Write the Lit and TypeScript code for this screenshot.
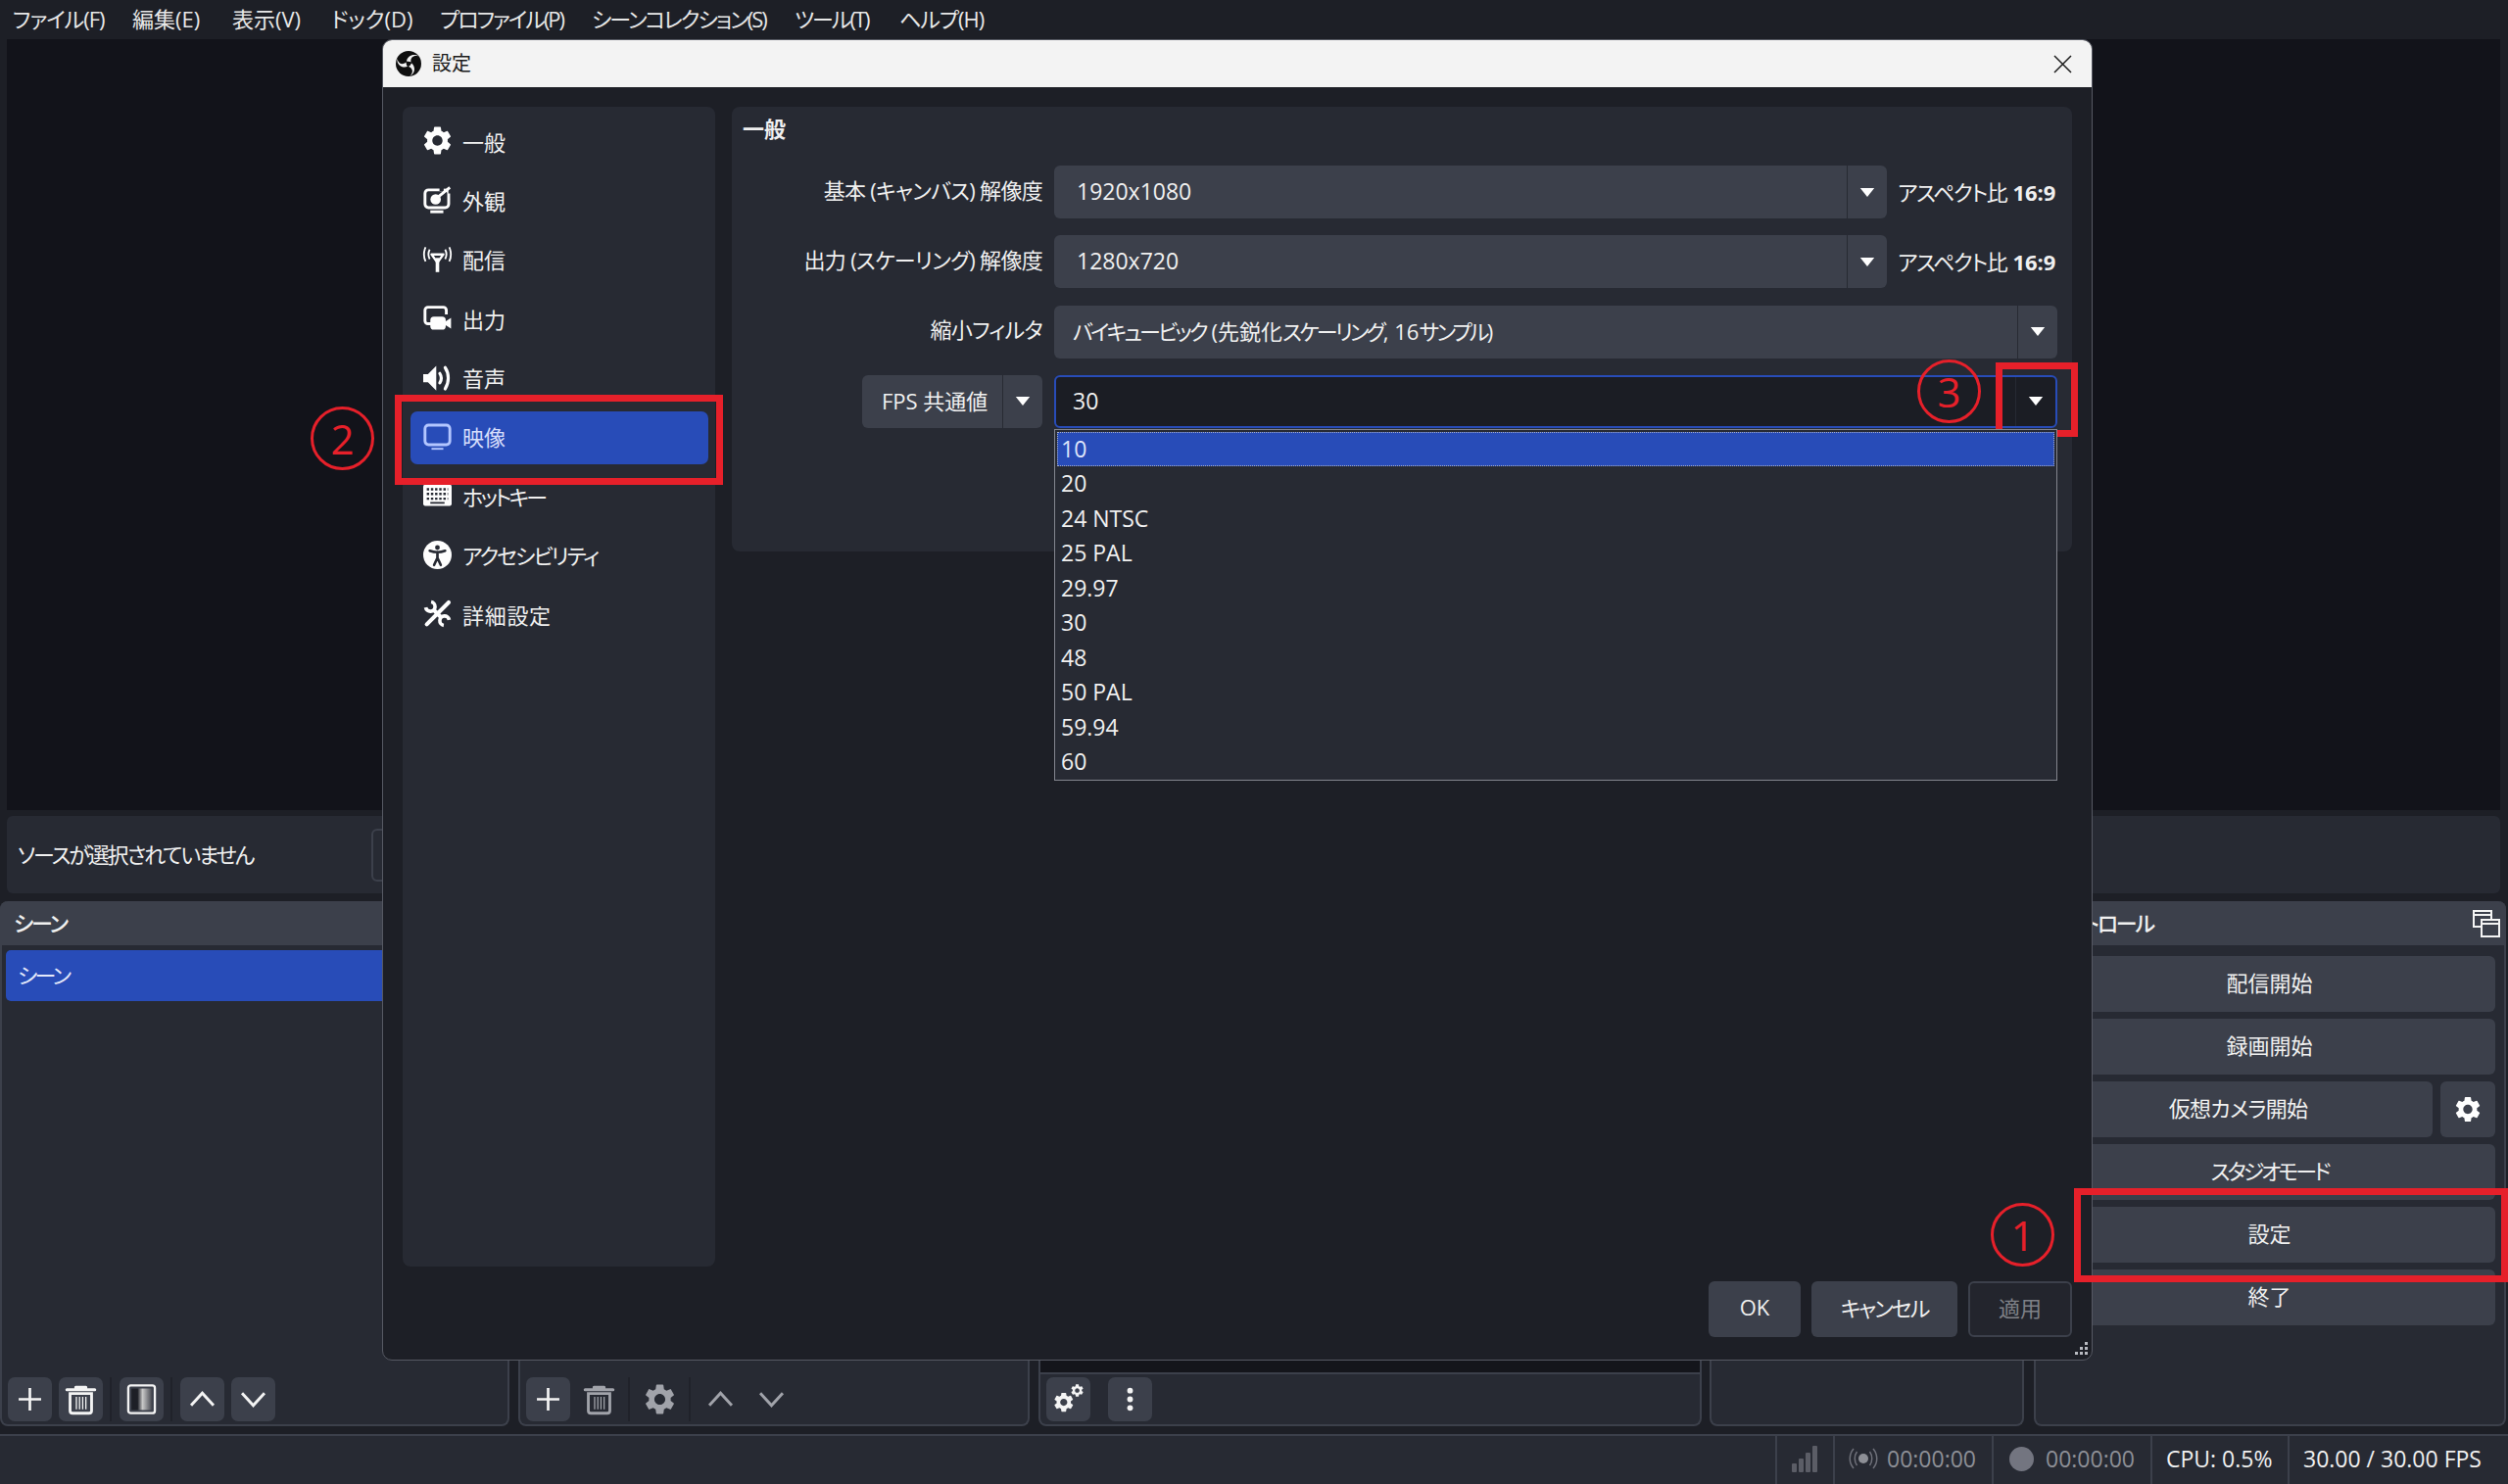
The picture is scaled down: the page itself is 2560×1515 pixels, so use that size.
import { LitElement, css, html, svg } from "lit";
import { customElement } from "lit/decorators.js";

const GEAR =
  "M19.14 12.94c.04-.3.06-.61.06-.94 0-.32-.02-.64-.07-.94l2.03-1.58a.49.49 0 0 0 .12-.61l-1.92-3.32a.488.488 0 0 0-.59-.22l-2.39.96c-.5-.38-1.03-.7-1.62-.94l-.36-2.54a.484.484 0 0 0-.48-.41h-3.84c-.24 0-.43.17-.47.41l-.36 2.54c-.59.24-1.13.57-1.62.94l-2.39-.96c-.22-.08-.47 0-.59.22L2.74 8.87c-.12.21-.08.47.12.61l2.03 1.58c-.05.3-.09.63-.09.94s.02.64.07.94l-2.03 1.58a.49.49 0 0 0-.12.61l1.92 3.32c.12.22.37.29.59.22l2.39-.96c.5.38 1.03.7 1.62.94l.36 2.54c.05.24.24.41.48.41h3.84c.24 0 .44-.17.47-.41l.36-2.54c.59-.24 1.13-.56 1.62-.94l2.39.96c.22.08.47 0 .59-.22l1.92-3.32c.12-.22.07-.47-.12-.61l-2.01-1.58zM12 15.6c-1.98 0-3.6-1.62-3.6-3.6s1.62-3.6 3.6-3.6 3.6 1.62 3.6 3.6-1.62 3.6-3.6 3.6z";

const icon = (body: unknown, box = "0 0 24 24") =>
  html`<svg class="icon" viewBox=${box} fill="none" stroke="none">${body}</svg>`;

// 歯車は余白を詰めて描く
const gear = icon(svg`<path d=${GEAR} fill="currentColor" fill-rule="evenodd" />`, "2 2 20 20");

const arrow = html`<svg class="arrow" viewBox="0 0 16 10"><path d="M0 0h16L8 10z" fill="#fefefe" /></svg>`;

const icons = {
  general: gear,
  look: icon(svg`
    <rect x="1.500" y="4" width="20" height="15" rx="3" stroke="currentColor" stroke-width="2.400" />
    <path d="M15.500 2v3M17 1h6v6" stroke="#272a33" stroke-width="3.500" />
    <circle cx="10.500" cy="12" r="4.400" fill="currentColor" />
    <path d="M12 10.500 22.500 2" stroke="currentColor" stroke-width="2.400" />
    <path d="M6 22.500h11" stroke="currentColor" stroke-width="2.400" />
  `),
  stream: icon(svg`
    <path d="M7 8h10l-5 7z" stroke="currentColor" stroke-width="2" stroke-linejoin="round" />
    <path d="M12 11v12" stroke="currentColor" stroke-width="3" />
    <path d="M5.500 4c-1.500 2.500-1.500 5 0 8M2 2c-1.800 4-1.800 8 0 12M18.500 4c1.500 2.500 1.500 5 0 8M22 2c1.800 4 1.800 8 0 12" stroke="currentColor" stroke-width="1.500" />
  `),
  output: icon(svg`
    <path d="M7 17H4a2.500 2.500 0 0 1-2.500-2.500v-9A2.500 2.500 0 0 1 4 3h13a2.500 2.500 0 0 1 2.500 2.500V9" stroke="currentColor" stroke-width="2.400" />
    <rect x="6" y="11" width="13" height="11" rx="3" fill="currentColor" />
    <path d="M18 15.500 23.500 12v9L18 17.500z" fill="currentColor" />
  `),
  audio: icon(svg`
    <path d="M0 9h4l7-7v21l-7-7H0z" fill="currentColor" stroke="none" />
    <path d="M14 8.500c1.600 2.500 1.600 5.500 0 8M18.500 3.500c3.500 5 3.500 13 0 18" stroke="currentColor" stroke-width="2.600" stroke-linecap="round" />
  `),
  video: icon(svg`
    <rect x="1.500" y="2.500" width="21" height="16.500" rx="3" stroke="currentColor" stroke-width="2.400" />
    <path d="M7 22.500h10" stroke="currentColor" stroke-width="1.600" />
  `),
  hotkey: icon(svg`
    <rect x="0" y="3" width="24" height="18" rx="1.500" fill="currentColor" />
    <path d="M3 7h18M3 11h18M3 15h18" stroke="#272a33" stroke-width="2" stroke-dasharray="2 1.500" />
    <path d="M6 18.500h12" stroke="#272a33" stroke-width="1.500" />
  `),
  access: icon(svg`
    <circle cx="12" cy="12" r="12" fill="currentColor" />
    <circle cx="12" cy="5.800" r="2" fill="#272a33" />
    <path d="M5.500 8.500c4 1.500 9 1.500 13 0M12 9.500v6M12 14.500l-2.800 6M12 14.500l2.800 6" stroke="#272a33" stroke-width="2.200" stroke-linecap="round" />
  `),
  tools: icon(svg`
    <path d="M21.500 2.500 3 21" stroke="currentColor" stroke-width="3.400" stroke-linecap="round" />
    <path d="M6.700 2.060A4 4 0 1 1 2.060 6.700" stroke="currentColor" stroke-width="3" />
    <path d="M17.300 21.940A4 4 0 1 1 21.940 17.300" stroke="currentColor" stroke-width="3" />
    <path d="M8.500 8.500 15.500 15.500" stroke="currentColor" stroke-width="3.400" />
  `),
};

const plus = icon(svg`<path d="M12 1v22M1 12h22" stroke="currentColor" stroke-width="2.600" />`);
const trash = icon(svg`
  <path d="M1 4.500h22M8 2.500h8" stroke="currentColor" stroke-width="2.400" stroke-linecap="round" />
  <path d="M3.500 7.500h17v13.500a2 2 0 0 1-2 2h-13a2 2 0 0 1-2-2z" stroke="currentColor" stroke-width="2.200" />
  <path d="M8.500 10v10M11 10v10M13.500 10v10M16 10v10" stroke="currentColor" stroke-width="1" />
`);
const filter = icon(svg`
  <defs>
    <linearGradient id="fade">
      <stop offset="0.3" stop-color="#1d1f26" />
      <stop offset="0.55" stop-color="#c8c8c8" />
      <stop offset="1" stop-color="#4a4c54" />
    </linearGradient>
  </defs>
  <rect x="1.500" y="1" width="21" height="22" rx="2" stroke="currentColor" stroke-width="1.800" />
  <rect x="4" y="3.500" width="16" height="17" fill="url(#fade)" />
`);
const up = icon(svg`<path d="M1 18 12 6l11 12" stroke="currentColor" stroke-width="2.800" />`);
const down = icon(svg`<path d="M1 6l11 12L23 6" stroke="currentColor" stroke-width="2.800" />`);
const gears = icon(svg`
  <g transform="translate(-1 5) scale(.78)"><path d=${GEAR} fill="currentColor" fill-rule="evenodd" /></g>
  <g transform="translate(13 -1) scale(.5)"><path d=${GEAR} fill="currentColor" fill-rule="evenodd" /></g>
`);
const dots = icon(svg`
  <circle cx="12" cy="3.500" r="2.800" fill="currentColor" />
  <circle cx="12" cy="12" r="2.800" fill="currentColor" />
  <circle cx="12" cy="20.500" r="2.800" fill="currentColor" />
`);

const obsLogo = html`<svg class="logo" viewBox="-13 -13 26 26">
  <circle r="13" fill="#0f0f0f" />
  ${[0, 120, 240].map(
    (a) => svg`<path transform="rotate(${a})" d="M-2-2.500C-1-8 5-11 10.500-7.500 5.500-9 1.500-6.500 2.500-1.500z" fill="#f3f3f3" />`,
  )}
  <circle r="2.300" fill="#0f0f0f" />
</svg>`;

// カナが多いラベルは参照の字幅に合わせて詰める
const MENU: [string, string][] = [
  ["ファイル(F)", "ls-1"],
  ["編集(E)", ""],
  ["表示(V)", ""],
  ["ドック(D)", ""],
  ["プロファイル(P)", "ls-2"],
  ["シーンコレクション(S)", "ls-2"],
  ["ツール(T)", "ls-2"],
  ["ヘルプ(H)", "ls-1"],
];
const NAV: [string, keyof typeof icons, string][] = [
  ["一般", "general", ""],
  ["外観", "look", ""],
  ["配信", "stream", ""],
  ["出力", "output", ""],
  ["音声", "audio", ""],
  ["映像", "video", ""],
  ["ホットキー", "hotkey", "ls-3"],
  ["アクセシビリティ", "access", "ls-2"],
  ["詳細設定", "tools", "ls-wide"],
];
const FPS = ["10", "20", "24 NTSC", "25 PAL", "29.97", "30", "48", "50 PAL", "59.94", "60"];

@customElement("app-root")
export class AppRoot extends LitElement {
  static styles = css`
    :host {
      display: block;
      position: relative;
      width: 2560px;
      height: 1515px;
      overflow: hidden;
      background: #1d1f26;
      color: #f0f0f0;
      font-family: "Open Sans", "Noto Sans CJK JP", sans-serif;
      font-size: 22px;
      font-feature-settings: "palt";
    }
    * {
      box-sizing: border-box;
    }
    .ls-1 {
      letter-spacing: -1px;
    }
    .ls-2 {
      letter-spacing: -2px;
    }
    .ls-3 {
      letter-spacing: -2.700px;
    }
    .ls-wide {
      letter-spacing: 0.700px;
    }
    .icon {
      display: block;
      width: 100%;
      height: 100%;
      overflow: visible;
    }
    .window {
      display: flex;
      flex-direction: column;
      height: 100%;
    }

    .menubar {
      display: grid;
      grid-template-columns: 122px 102px 101px 111px 155px 207px 107px auto;
      height: 40px;
      padding: 0 0 5px 13px;
      flex: none;
      align-items: center;
      color: #e8e8e8;
      white-space: nowrap;
    }
    .preview {
      height: 787px;
      margin: 0 8px 0 7px;
      flex: none;
      background: #12131a;
    }
    .context {
      display: flex;
      align-items: center;
      height: 79px;
      margin: 6px 8px 8px 7px;
      padding: 0 0 4px 11px;
      flex: none;
      border-radius: 6px;
      background: #272a33;
      letter-spacing: -2.100px;
    }
    .context-btn {
      width: 100px;
      height: 54px;
      margin: 4px 0 0 121px;
      border: 2px solid #3c404b;
      border-radius: 6px;
    }

    .docks {
      display: flex;
      height: 536px;
      flex: none;
    }
    .dock {
      display: flex;
      flex-direction: column;
      flex: none;
      border: 2px solid #3c404b;
      border-top: 0;
      border-radius: 8px;
      background: #272a33;
    }
    .dock-scenes {
      width: 520px;
      margin-right: 9px;
    }
    .dock-sources {
      width: 522px;
      margin-right: 9px;
    }
    .dock-mixer {
      width: 677px;
      margin-right: 8px;
    }
    .dock-trans {
      width: 321px;
      margin-right: 10px;
    }
    .dock-controls {
      width: 482px;
    }
    .dock-head {
      display: flex;
      align-items: center;
      justify-content: space-between;
      height: 45px;
      margin: 0 -2px;
      padding: 0 6px 4px 14px;
      flex: none;
      border-radius: 8px 8px 0 0;
      background: #3c404b;
      font-weight: 500;
      letter-spacing: -2.200px;
    }
    .float {
      width: 28px;
      height: 28px;
      margin-top: 4px;
    }
    .dock-body {
      flex: 1;
      min-height: 0;
    }
    .scene-row {
      display: flex;
      align-items: center;
      height: 52px;
      margin: 5px 0 0 4px;
      padding: 0 0 4px 12px;
      border-radius: 5px;
      background: #284cb8;
      color: #e4e9fb;
      letter-spacing: -2.700px;
    }
    .mixer-strip {
      flex: 1;
      border-bottom: 2px solid #3c404b;
      background: #14151b;
    }
    .toolbar {
      display: flex;
      align-items: center;
      height: 51px;
      padding-left: 6px;
      flex: none;
    }
    .tool {
      width: 45px;
      height: 45px;
      padding: 10px;
      margin-right: 7px;
      flex: none;
      border-radius: 7px;
      color: #f4f4f4;
    }
    .tool.filled {
      background: #3c404b;
    }
    .tool.off {
      color: #a1a3aa;
    }
    .tool.tight {
      padding: 7px;
    }
    .tool.wide {
      margin-right: 18px;
    }
    .tool-sep {
      width: 2px;
      height: 45px;
      margin-right: 8px;
      flex: none;
      background: #20222a;
    }

    .controls {
      display: flex;
      flex-direction: column;
      gap: 7px;
      padding: 11px 9px 0 8px;
    }
    .btn {
      display: flex;
      align-items: center;
      justify-content: center;
      height: 57px;
      padding-bottom: 5px;
      flex: none;
      border-radius: 6px;
      background: #3c404b;
      white-space: nowrap;
    }
    .cam-row {
      display: flex;
      gap: 8px;
    }
    .cam-row .btn:first-child {
      flex: 1;
      letter-spacing: -0.700px;
    }
    .gear-btn {
      width: 56px;
      padding: 15px;
      color: #fefefe;
    }
    .studio {
      letter-spacing: -3px;
    }

    .status {
      display: flex;
      justify-content: flex-end;
      height: 51px;
      margin-top: 8px;
      flex: none;
      border-top: 2px solid #3c404b;
      background: #272a33;
      font-size: 23px;
    }
    .cell {
      display: flex;
      align-items: center;
      padding-bottom: 3px;
      border-left: 2px solid #3c404b;
      white-space: nowrap;
    }
    .cell-signal {
      width: 59px;
      padding-left: 14px;
    }
    .cell-signal svg {
      width: 30px;
      height: 30px;
    }
    .cell-stream,
    .cell-rec {
      width: 162px;
      color: #8d8f96;
    }
    .cell-stream {
      padding-left: 14px;
      gap: 9px;
    }
    .cell-stream svg {
      width: 30px;
      height: 30px;
    }
    .cell-rec {
      padding-left: 16px;
      gap: 12px;
    }
    .rec-dot {
      width: 25px;
      height: 25px;
      border-radius: 50%;
      background: #737580;
    }
    .cell-cpu {
      width: 140px;
      padding-left: 14px;
    }
    .cell-fps {
      width: 225px;
      padding-left: 14px;
    }

    /* 設定ダイアログ */
    .dialog {
      position: absolute;
      left: 390px;
      top: 40px;
      display: flex;
      flex-direction: column;
      width: 1746px;
      height: 1349px;
      border: 1px solid #565963;
      border-radius: 10px;
      background: #1d1f26;
    }
    .titlebar {
      display: flex;
      align-items: center;
      gap: 11px;
      height: 48px;
      padding: 0 20px 0 13px;
      flex: none;
      border-radius: 9px 9px 0 0;
      background: #f3f3f3;
      color: #1c1c1c;
      font-size: 20px;
    }
    .titlebar span {
      padding-bottom: 3px;
    }
    .logo {
      width: 26px;
      height: 26px;
    }
    .close {
      width: 19px;
      height: 19px;
      margin-left: auto;
    }
    .dlg-body {
      display: flex;
      gap: 17px;
      height: 1204px;
      padding: 20px 20px 0;
      flex: none;
    }
    .sidebar {
      display: flex;
      flex-direction: column;
      gap: 6.400px;
      width: 319px;
      padding: 9px 7px 0 8px;
      flex: none;
      border-radius: 8px;
      background: #272a33;
    }
    .nav {
      display: flex;
      align-items: center;
      gap: 11px;
      height: 54px;
      padding: 0 0 3px 13px;
      flex: none;
      border-radius: 7px;
    }
    .nav.on {
      background: #284cb8;
      color: #d5ddfb;
    }
    .nav-icon {
      width: 29px;
      height: 29px;
      flex: none;
      color: #fefefe;
    }
    .nav.on .nav-icon {
      color: #b3c6ff;
    }
    .panel {
      display: grid;
      grid-template-columns: 317px 1fr;
      grid-auto-rows: 54px;
      row-gap: 17.300px;
      flex: 1;
      height: 454px;
      padding: 60px 15px 0 0;
      align-items: center;
      position: relative;
      border-radius: 8px;
      background: #272a33;
    }
    .panel-title {
      position: absolute;
      left: 11px;
      top: 7px;
      font-weight: 700;
      line-height: 30px;
    }
    .label {
      padding-bottom: 7px;
      text-align: right;
      letter-spacing: -0.700px;
    }
    .fields {
      display: flex;
      align-items: center;
      margin-left: 12px;
      height: 54px;
      position: relative;
    }
    .select {
      display: flex;
      align-items: center;
      flex: 1;
      height: 54px;
      padding-left: 19px;
      border-radius: 6px;
      background: #3c404b;
    }
    .select.res {
      padding-left: 23px;
    }
    .select .value {
      flex: 1;
      padding-bottom: 2px;
      font-size: 23px;
    }
    .select .value.long {
      padding-bottom: 3px;
      font-size: 22px;
    }
    .kana {
      letter-spacing: -2.800px;
    }
    .select .drop {
      display: flex;
      align-items: center;
      justify-content: center;
      width: 41px;
      height: 100%;
      flex: none;
      border-left: 1px solid #272a33;
    }
    .arrow {
      width: 16px;
      height: 9px;
    }
    .select.focus {
      border: 2px solid #284cb8;
      padding-left: 17px;
      background: #1b1d24;
    }
    .aspect {
      width: 174px;
      padding: 0 0 3px 11px;
      flex: none;
      white-space: nowrap;
    }
    .aspect span {
      letter-spacing: -1.400px;
    }
    .aspect b {
      margin-left: 6px;
      font-weight: 700;
    }
    .fps-cell {
      display: flex;
      justify-content: flex-end;
    }
    .fps-type {
      display: flex;
      align-items: center;
      width: 184px;
      height: 54px;
      padding-left: 20px;
      border-radius: 6px;
      background: #3c404b;
      white-space: nowrap;
    }
    .fps-type .text {
      flex: 1;
      padding-bottom: 3px;
    }
    .fps-type .drop {
      display: flex;
      align-items: center;
      justify-content: center;
      width: 41px;
      height: 100%;
      flex: none;
      border-left: 1px solid #272a33;
    }
    .popup {
      position: absolute;
      left: 0;
      right: 0;
      top: 55px;
      height: 359px;
      padding: 2px;
      border: 1px solid #83858e;
      background: #272a33;
      font-size: 23px;
      z-index: 1;
    }
    .popup div {
      display: flex;
      align-items: center;
      height: 35.500px;
      padding: 0 0 2px 4px;
    }
    .popup .on {
      background: #284cb8;
      outline: 1px dotted #a8aec4;
      outline-offset: -1px;
      color: #dfe5fb;
    }
    .dlg-foot {
      display: flex;
      justify-content: flex-end;
      gap: 11px;
      padding: 15px 20px 0;
    }
    .dlg-foot .btn {
      width: 94px;
    }
    .dlg-foot .btn.cancel {
      width: 149px;
      letter-spacing: -2px;
    }
    .dlg-foot .btn.apply {
      width: 106px;
      border: 2px solid #3c404b;
      background: #23252d;
      color: #7f8187;
    }
    .grip {
      position: absolute;
      right: 3px;
      bottom: 3px;
      width: 16px;
      height: 16px;
    }

    /* 手順の注釈 */
    .mark {
      position: absolute;
      border: 7px solid #e6202a;
    }
    .mark-1 {
      left: 2117px;
      top: 1213px;
      width: 443px;
      height: 96px;
    }
    .mark-2 {
      left: 403px;
      top: 403px;
      width: 335px;
      height: 92px;
    }
    .mark-3 {
      left: 2037px;
      top: 370px;
      width: 84px;
      height: 76px;
    }
    .num {
      position: absolute;
      display: flex;
      align-items: center;
      justify-content: center;
      width: 65px;
      height: 65px;
      border: 3px solid #e6202a;
      border-radius: 50%;
      color: #e6202a;
      font-size: 42px;
      font-weight: 500;
      line-height: 1;
    }
    .num-1 {
      left: 2032px;
      top: 1228px;
    }
    .num-2 {
      left: 317px;
      top: 415px;
    }
    .num-3 {
      left: 1957px;
      top: 367px;
    }
  `;

  private renderDocks() {
    return html`
      <div class="docks">
        <div class="dock dock-scenes">
          <div class="dock-head">シーン</div>
          <div class="dock-body"><div class="scene-row">シーン</div></div>
          <div class="toolbar">
            <div class="tool filled">${plus}</div>
            <div class="tool filled tight">${trash}</div>
            <div class="tool-sep"></div>
            <div class="tool filled tight">${filter}</div>
            <div class="tool-sep"></div>
            <div class="tool filled">${up}</div>
            <div class="tool filled">${down}</div>
          </div>
        </div>
        <div class="dock dock-sources">
          <div class="dock-head">ソース</div>
          <div class="dock-body"></div>
          <div class="toolbar">
            <div class="tool filled">${plus}</div>
            <div class="tool off tight">${trash}</div>
            <div class="tool-sep"></div>
            <div class="tool off tight">${gear}</div>
            <div class="tool-sep"></div>
            <div class="tool off">${up}</div>
            <div class="tool off">${down}</div>
          </div>
        </div>
        <div class="dock dock-mixer">
          <div class="dock-head">音声ミキサー</div>
          <div class="mixer-strip"></div>
          <div class="toolbar">
            <div class="tool filled tight wide">${gears}</div>
            <div class="tool filled">${dots}</div>
          </div>
        </div>
        <div class="dock dock-trans">
          <div class="dock-head">シーントランジション</div>
        </div>
        <div class="dock dock-controls">
          <div class="dock-head">
            コントロール
            <svg class="float" viewBox="0 0 28 28" fill="none" stroke="#f4f4f4" stroke-width="2">
              <rect x="1" y="1" width="18" height="16" fill="#3c404b" />
              <path d="M1 5h18" />
              <rect x="9" y="10" width="18" height="17" fill="#3c404b" />
              <path d="M9 14h18" />
            </svg>
          </div>
          <div class="controls">
            <div class="btn">配信開始</div>
            <div class="btn">録画開始</div>
            <div class="cam-row">
              <div class="btn">仮想カメラ開始</div>
              <div class="btn gear-btn">${gear}</div>
            </div>
            <div class="btn studio">スタジオモード</div>
            <div class="btn">設定</div>
            <div class="btn">終了</div>
          </div>
        </div>
      </div>
    `;
  }

  private renderStatus() {
    return html`
      <div class="status">
        <div class="cell cell-signal">
          <svg viewBox="0 0 30 30" fill="#5b5d66">
            <rect x="1" y="20" width="5" height="9" rx="1" />
            <rect x="8" y="15" width="5" height="14" rx="1" />
            <rect x="15" y="9" width="5" height="20" rx="1" />
            <rect x="22" y="2" width="5" height="27" rx="1" />
          </svg>
        </div>
        <div class="cell cell-stream">
          <svg viewBox="0 0 30 30" fill="none" stroke="#6f717a" stroke-width="1.500">
            <circle cx="15" cy="15" r="5" fill="#8d8f96" stroke="none" />
            <path d="M8.500 8c-3 4-3 10 0 14M5 5c-5 6-5 14 0 20M21.500 8c3 4 3 10 0 14M25 5c5 6 5 14 0 20" />
          </svg>
          00:00:00
        </div>
        <div class="cell cell-rec"><div class="rec-dot"></div>00:00:00</div>
        <div class="cell cell-cpu">CPU: 0.5%</div>
        <div class="cell cell-fps">30.00 / 30.00 FPS</div>
      </div>
    `;
  }

  private renderDialog() {
    return html`
      <div class="dialog">
        <div class="titlebar">
          ${obsLogo}<span>設定</span>
          <svg class="close" viewBox="0 0 19 19" stroke="#1c1c1c" stroke-width="1.500">
            <path d="M1 1l17 17M18 1 1 18" />
          </svg>
        </div>
        <div class="dlg-body">
          <div class="sidebar">
            ${NAV.map(
              ([label, key, ls]) => html`
                <div class="nav ${key === "video" ? "on" : ""}">
                  <div class="nav-icon">${icons[key]}</div>
                  <span class=${ls}>${label}</span>
                </div>
              `,
            )}
          </div>
          <div class="panel">
            <div class="panel-title">一般</div>
            <div class="label">基本 (キャンバス) 解像度</div>
            <div class="fields">
              <div class="select res"><span class="value">1920x1080</span><span class="drop">${arrow}</span></div>
              <div class="aspect"><span>アスペクト比</span><b>16:9</b></div>
            </div>
            <div class="label">出力 (スケーリング) 解像度</div>
            <div class="fields">
              <div class="select res"><span class="value">1280x720</span><span class="drop">${arrow}</span></div>
              <div class="aspect"><span>アスペクト比</span><b>16:9</b></div>
            </div>
            <div class="label">縮小フィルタ</div>
            <div class="fields">
              <div class="select">
                <span class="value long"
                  ><span class="kana">バイキュービック</span> (先鋭化<span class="kana">スケーリング</span>, 16<span
                    class="kana"
                    >サンプル</span
                  >)</span
                ><span class="drop">${arrow}</span>
              </div>
            </div>
            <div class="fps-cell">
              <div class="fps-type"><span class="text">FPS 共通値</span><span class="drop">${arrow}</span></div>
            </div>
            <div class="fields">
              <div class="select focus"><span class="value">30</span><span class="drop">${arrow}</span></div>
              <div class="popup">
                ${FPS.map((v, i) => html`<div class=${i === 0 ? "on" : ""}>${v}</div>`)}
              </div>
            </div>
          </div>
        </div>
        <div class="dlg-foot">
          <div class="btn">OK</div>
          <div class="btn cancel">キャンセル</div>
          <div class="btn apply">適用</div>
        </div>
        <svg class="grip" viewBox="0 0 16 16" fill="#b8bac0">
          <rect x="12" y="1" width="3" height="3" />
          <rect x="7" y="6" width="3" height="3" />
          <rect x="12" y="6" width="3" height="3" />
          <rect x="2" y="11" width="3" height="3" />
          <rect x="7" y="11" width="3" height="3" />
          <rect x="12" y="11" width="3" height="3" />
        </svg>
      </div>
    `;
  }

  render() {
    return html`
      <div class="window">
        <div class="menubar">${MENU.map(([m, ls]) => html`<span class=${ls}>${m}</span>`)}</div>
        <div class="preview"></div>
        <div class="context">
          ソースが選択されていません
          <div class="context-btn"></div>
        </div>
        ${this.renderDocks()} ${this.renderStatus()}
      </div>
      ${this.renderDialog()}
      <div class="mark mark-1"></div>
      <div class="mark mark-2"></div>
      <div class="mark mark-3"></div>
      <div class="num num-1">1</div>
      <div class="num num-2">2</div>
      <div class="num num-3">3</div>
    `;
  }
}
